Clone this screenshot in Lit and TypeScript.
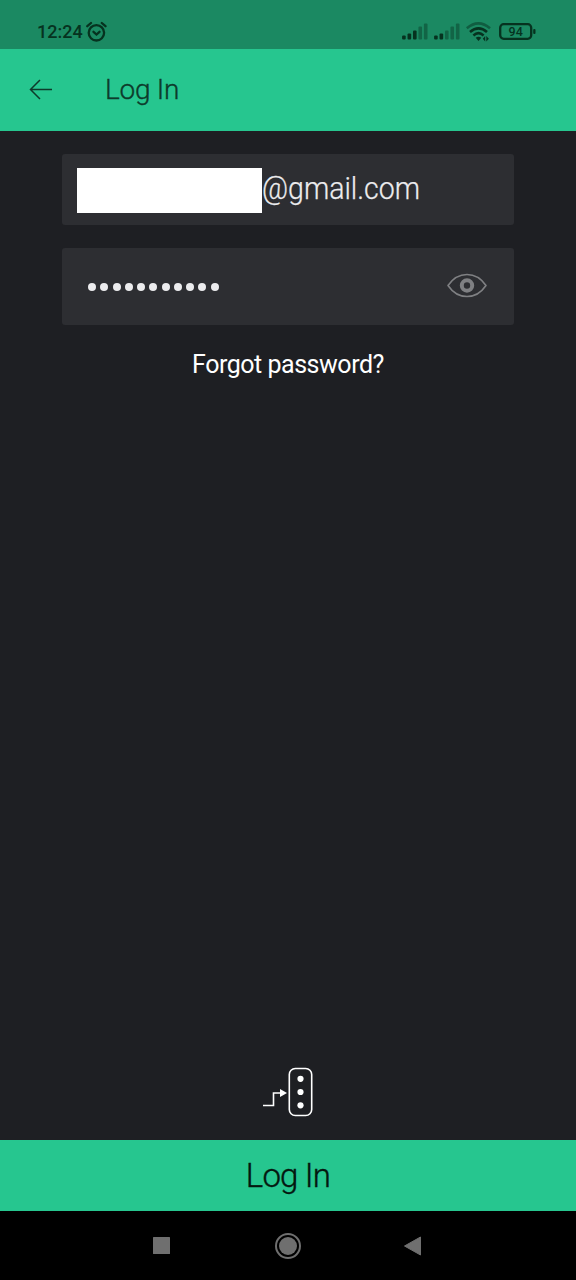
import { LitElement, html, css, svg } from "lit";
import { customElement } from "lit/decorators.js";

const signal = (lit: number) => html`
  <svg class="signal" width="26" height="17" viewBox="0 0 26 17">
    ${[4, 6, 9, 13, 16].map(
      (h, i) => svg`<rect x=${0.1 + i * 5.45} y=${16.5 - h} width="3.6" height=${h} rx="1"
        fill="#06321f" opacity=${i < lit ? 1 : 0.42} />`
    )}
  </svg>`;

@customElement("app-root")
export class AppRoot extends LitElement {
  static styles = css`
    :host {
      display: flex;
      flex-direction: column;
      width: 576px;
      height: 1280px;
      background: #1e1f23;
      font-family: Roboto, "Noto Sans", sans-serif;
      font-weight: 300;
      overflow: hidden;
    }
    svg { display: block; flex: none; }
    .status {
      flex: none;
      height: 49px;
      box-sizing: border-box;
      display: flex;
      align-items: center;
      padding: 14px 40px 0 37px;
      background: #1b8962;
      color: #06321f;
    }
    .time { font-size: 18px; font-weight: 500; line-height: 24px; width: 49px; white-space: nowrap; }
    .indicators { margin-left: auto; display: flex; align-items: center; }
    .signal { margin-right: 6px; }
    .wifi { margin-right: 7px; }
    .header {
      flex: none;
      height: 82px;
      box-sizing: border-box;
      display: flex;
      align-items: center;
      padding-left: 29px;
      background: #26c68f;
      color: #0d3b2b;
    }
    .title { margin-left: 51px; font-size: 28px; line-height: 36px; letter-spacing: -0.25px; -webkit-text-stroke: 0.35px; }
    .form { flex: 1; display: flex; flex-direction: column; padding: 23px 62px 0; }
    .field {
      box-sizing: border-box;
      display: flex;
      align-items: center;
      background: #2d2e32;
      border-radius: 3px;
      color: #ececee;
    }
    .email { height: 71px; padding: 0 15px; }
    .mask { width: 185px; height: 45px; margin-top: 2px; background: #fff; }
    .domain {
      font-size: 31px;
      line-height: 40px;
      padding-bottom: 1px;
      transform: scaleX(0.92);
      transform-origin: left;
      -webkit-text-stroke: 0.25px;
    }
    .password { height: 77px; margin-top: 23px; padding: 0 27px 0 26px; justify-content: space-between; }
    .dots { display: flex; gap: 4.25px; padding-top: 1px; }
    .dot { width: 8px; height: 8px; border-radius: 50%; background: #ececee; }
    .eye { margin-bottom: 2px; }
    .forgot {
      margin-top: 21px;
      text-align: center;
      font-size: 26px;
      line-height: 36px;
      font-weight: 400;
      color: #fff;
      letter-spacing: -0.5px;
      transform: scaleX(0.962);
    }
    .server { flex: none; display: flex; justify-content: center; height: 74px; }
    .submit {
      flex: none;
      height: 71px;
      display: flex;
      align-items: center;
      justify-content: center;
      background: #26c68f;
      color: #04170f;
      font-size: 33px;
      letter-spacing: -0.8px;
      -webkit-text-stroke: 0.4px;
    }
    .nav { flex: none; height: 69px; background: #000; display: flex; align-items: center; padding-left: 152px; }
    .home { margin-left: 103px; }
    .back { margin-left: 101px; }
  `;

  render() {
    return html`
      <div class="status">
        <span class="time">12:24</span>
        <svg width="22" height="22" viewBox="0 0 22 22" fill="none" stroke="#06321f" stroke-width="2.3" stroke-linecap="round">
          <circle cx="10.4" cy="11.8" r="7.7" />
          <path d="M1.3 5.2 5 2M19.5 5.2 15.8 2M7.5 10.8l3 2.7 3-2.7" />
        </svg>
        <div class="indicators">
          ${signal(3)}${signal(2)}
          <svg class="wifi" width="26" height="20" viewBox="0 0 26 20" fill="none" stroke="#06321f" stroke-width="2.6">
            <path opacity=".5" d="M0.8 6.3Q12.5-3.5 24 6.3" />
            <path d="M4 10Q12.5 2.6 21 10M7.4 13.4Q12.5 9 17.6 13.4" />
            <path fill="#06321f" stroke="none" d="m9.7 15.8 2.8 3.2 2.8-3.2q-2.8-2-5.6 0ZM16.8 16.7l2.4-2.7v5.5zM20.3 14l2.6 2.8-2.6 2.7Z" />
          </svg>
          <svg width="37" height="18" viewBox="0 0 37 18">
            <rect x="1.2" y="1.2" width="31" height="14.6" rx="3.5" fill="none" stroke="#06321f" stroke-width="2.3" />
            <rect x="34.2" y="6" width="2.3" height="5" rx="1" fill="#06321f" />
            <text x="16.7" y="13.1" text-anchor="middle" font-size="12.5" font-weight="500" fill="#06321f">94</text>
          </svg>
        </div>
      </div>
      <div class="header">
        <svg width="25" height="22" viewBox="0 0 25 22" fill="none" stroke="#0d3b2b" stroke-width="1.5">
          <path d="M23 10.5H1.5M11 1 1.5 10.5l9.5 9.5" />
        </svg>
        <span class="title">Log In</span>
      </div>
      <div class="form">
        <div class="field email"><div class="mask"></div><span class="domain">@gmail.com</span></div>
        <div class="field password">
          <div class="dots">${Array.from({ length: 11 }, () => html`<span class="dot"></span>`)}</div>
          <svg class="eye" width="40" height="26" viewBox="0 0 40 26" fill="none" stroke="#7f8083">
            <path stroke-width="1.6" stroke-linejoin="round" d="M1 12.5C11-2.2 29-2.2 39 12.5 29 27.2 11 27.2 1 12.5Z" />
            <circle cx="20" cy="12.5" r="5.2" stroke-width="4" />
          </svg>
        </div>
        <div class="forgot">Forgot password?</div>
      </div>
      <div class="server">
        <svg width="52" height="52" viewBox="0 0 52 52" fill="none" stroke="#fff" stroke-width="1.6">
          <path d="M1 39.5h10.5V27H19" />
          <path d="m18 23 7 4-7 4Z" fill="#fff" stroke="none" />
          <rect x="27.3" y="2.5" width="22.4" height="47" rx="6" />
          <g fill="#fff" stroke="none">
            <circle cx="38.5" cy="12.8" r="3.1" /><circle cx="38.5" cy="26" r="3.1" /><circle cx="38.5" cy="39.3" r="3.1" />
          </g>
        </svg>
      </div>
      <div class="submit">Log In</div>
      <div class="nav">
        <svg width="19" height="19" viewBox="0 0 19 19"><rect x="1" y="1" width="17" height="17" rx="0.5" fill="#6f6f6f" /></svg>
        <svg class="home" width="28" height="28" viewBox="0 0 28 28">
          <circle cx="14" cy="14" r="12" fill="none" stroke="#6f6f6f" stroke-width="2" />
          <circle cx="14" cy="14" r="9" fill="#6f6f6f" />
        </svg>
        <svg class="back" width="19" height="20" viewBox="0 0 19 20">
          <path d="M17.5 1v18L1.5 10Z" fill="#6f6f6f" stroke="#6f6f6f" stroke-width="1" stroke-linejoin="round" />
        </svg>
      </div>
    `;
  }
}
